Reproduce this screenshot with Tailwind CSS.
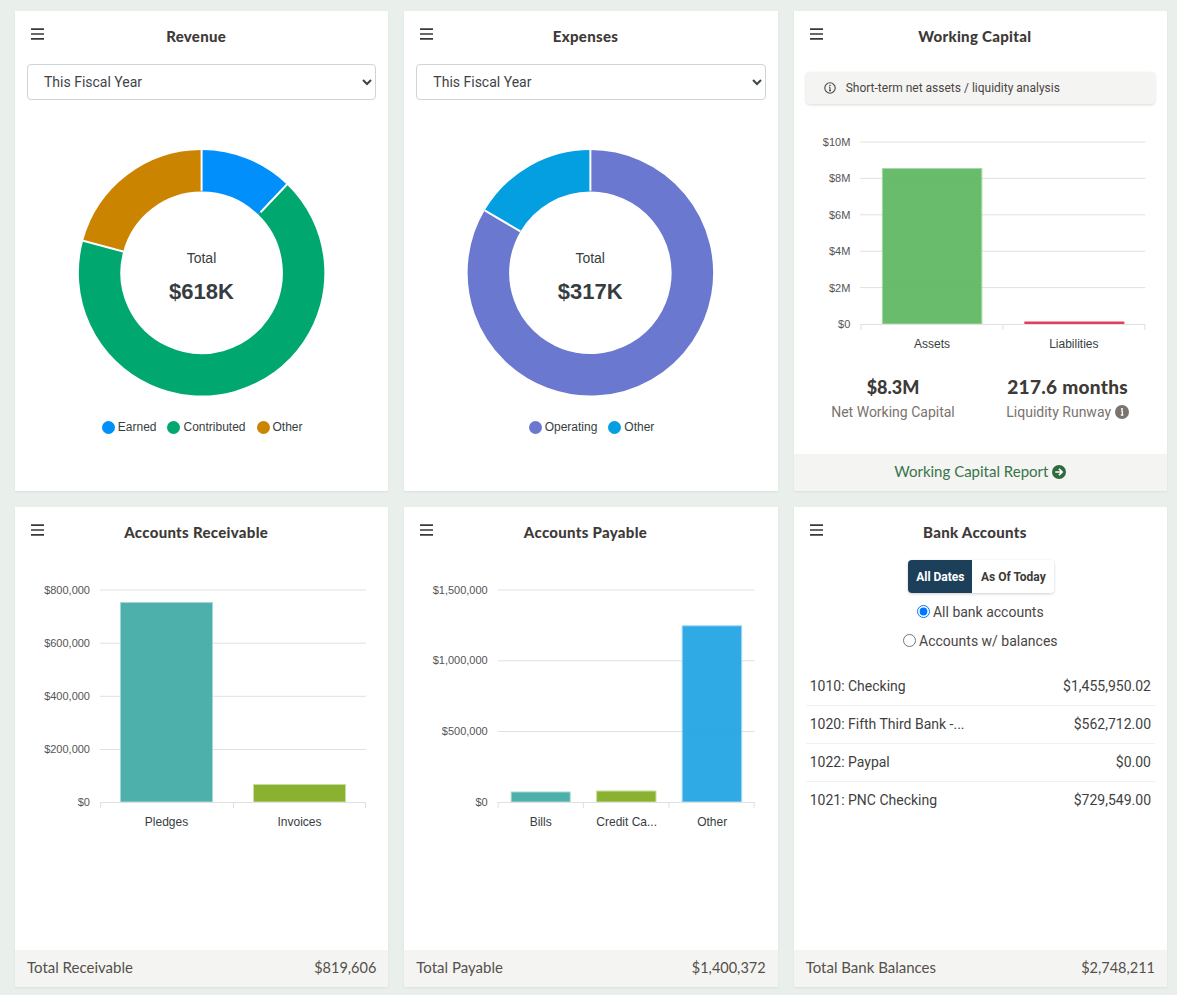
<!DOCTYPE html>
<html lang="en">
<head>
  <meta charset="UTF-8" />
  <title>Dashboard</title>
  <script src="https://cdn.jsdelivr.net/npm/@tailwindcss/browser@4"></script>
</head>
<body class="bg-[#e9f0ec] font-['Roboto',sans-serif] text-[#3d3a38]">
<div class="grid grid-cols-3 gap-4 pl-[15px] pr-[10px] pt-[11px] pb-2">

  <!-- Revenue -->
  <section class="bg-white h-[480px] flex flex-col shadow-[0_1px_2px_rgba(0,0,0,0.07)]">
    <div class="flex items-start h-[53px] pl-4 pr-10 pt-4">
      <svg class="mt-px w-[13px] h-3 text-[#3d3a38]" viewBox="0 0 13 12"><path d="M0 1.2h13M0 6h13M0 10.8h13" stroke="currentColor" stroke-width="1.7"/></svg>
      <h2 class="flex-1 text-center font-['Lato',sans-serif] font-black text-[15px] tracking-[0.3px] leading-[19px]">Revenue</h2>
    </div>
    <div class="px-3">
      <select class="w-full h-9 px-3 border border-[#ced4da] rounded text-sm text-[#3f4448] bg-white"><option>This Fiscal Year</option></select>
    </div>
    <svg class="mt-2.5 w-full h-[300px]" viewBox="15 110 373.33 300">
      <g transform="translate(201.6 272.8)" fill="none" stroke-width="41.5">
        <path d="M0 -102A102 102 0 0 1 70.86 -73.37" stroke="#008ffb"/>
        <path d="M70.86 -73.37A102 102 0 1 1 -98.43 -26.74" stroke="#00a76f"/>
        <path d="M-98.43 -26.74A102 102 0 0 1 0 -102" stroke="#cb8400"/>
        <path d="M0 -82V-123M59 -60.5L85.5 -88.5M-78.5 -21.3L-118.5 -32.1" stroke="#fff" stroke-width="2"/>
      </g>
      <text x="201.5" y="263" text-anchor="middle" class="font-['Liberation_Sans',sans-serif] text-sm" fill="#373d3f">Total</text>
      <text x="201.5" y="299" text-anchor="middle" class="font-['Liberation_Sans',sans-serif] text-[22px] font-bold" fill="#373d3f">$618K</text>
    </svg>
    <div class="mt-[7px] h-5 pl-px flex justify-center items-center gap-[11px] font-['Liberation_Sans',sans-serif] text-xs text-[#373d3f]">
      <span class="flex items-center gap-[3px]"><i class="w-[13px] h-[13px] rounded-full bg-[#008ffb]"></i>Earned</span>
      <span class="flex items-center gap-[3px]"><i class="w-[13px] h-[13px] rounded-full bg-[#00a76f]"></i>Contributed</span>
      <span class="flex items-center gap-[3px]"><i class="w-[13px] h-[13px] rounded-full bg-[#cb8400]"></i>Other</span>
    </div>
  </section>

  <!-- Expenses -->
  <section class="bg-white h-[480px] flex flex-col shadow-[0_1px_2px_rgba(0,0,0,0.07)]">
    <div class="flex items-start h-[53px] pl-4 pr-10 pt-4">
      <svg class="mt-px w-[13px] h-3 text-[#3d3a38]" viewBox="0 0 13 12"><path d="M0 1.2h13M0 6h13M0 10.8h13" stroke="currentColor" stroke-width="1.7"/></svg>
      <h2 class="flex-1 text-center font-['Lato',sans-serif] font-black text-[15px] tracking-[0.3px] leading-[19px]">Expenses</h2>
    </div>
    <div class="px-3">
      <select class="w-full h-9 px-3 border border-[#ced4da] rounded text-sm text-[#3f4448] bg-white"><option>This Fiscal Year</option></select>
    </div>
    <svg class="mt-2.5 w-full h-[300px]" viewBox="404.33 110 373.33 300">
      <g transform="translate(590.7 272.8)" fill="none" stroke-width="41.5">
        <path d="M0 -102A102 102 0 1 1 -87.8 -51.9" stroke="#6a78cf"/>
        <path d="M-87.8 -51.9A102 102 0 0 1 0 -102" stroke="#039fe0"/>
        <path d="M0 -82V-123M-70 -41.4L-105.7 -62.5" stroke="#fff" stroke-width="2"/>
      </g>
      <text x="590.5" y="263" text-anchor="middle" class="font-['Liberation_Sans',sans-serif] text-sm" fill="#373d3f">Total</text>
      <text x="590.5" y="299" text-anchor="middle" class="font-['Liberation_Sans',sans-serif] text-[22px] font-bold" fill="#373d3f">$317K</text>
    </svg>
    <div class="mt-[7px] h-5 pl-px flex justify-center items-center gap-[11px] font-['Liberation_Sans',sans-serif] text-xs text-[#373d3f]">
      <span class="flex items-center gap-[3px]"><i class="w-[13px] h-[13px] rounded-full bg-[#6a78cf]"></i>Operating</span>
      <span class="flex items-center gap-[3px]"><i class="w-[13px] h-[13px] rounded-full bg-[#039fe0]"></i>Other</span>
    </div>
  </section>

  <!-- Working Capital -->
  <section class="bg-white h-[480px] flex flex-col shadow-[0_1px_2px_rgba(0,0,0,0.07)]">
    <div class="flex items-start h-[61px] pl-4 pr-10 pt-4">
      <svg class="mt-px w-[13px] h-3 text-[#3d3a38]" viewBox="0 0 13 12"><path d="M0 1.2h13M0 6h13M0 10.8h13" stroke="currentColor" stroke-width="1.7"/></svg>
      <h2 class="flex-1 text-center font-['Lato',sans-serif] font-black text-[15px] tracking-[0.3px] leading-[19px]">Working Capital</h2>
    </div>
    <div class="mx-3 h-8 flex items-center gap-2.5 pl-[18px] bg-[#f4f4f2] rounded shadow-[0_1px_3px_rgba(0,0,0,0.15)] text-xs text-[#4a4644]">
      <svg class="w-3 h-3" viewBox="0 0 12 12"><circle cx="6" cy="6" r="5.2" fill="none" stroke="#4a4644" stroke-width="1.1"/><path d="M6 5.4v3M5 8.6h2M5 5.3h1" stroke="#4a4644" stroke-width="1.1" fill="none"/><circle cx="6" cy="3.5" r=".8" fill="#4a4644"/></svg>
      <span>Short-term net assets / liquidity analysis</span>
    </div>
    <svg class="mt-2 w-full h-[244px] font-['Liberation_Sans',sans-serif]" viewBox="793.67 112 373.33 244">
      <path d="M860 142H1145M860 178.4H1145M860 214.8H1145M860 251.2H1145M860 287.6H1145" stroke="#e0e0e0" fill="none"/>
      <rect x="882" y="168.5" width="99.5" height="155.5" fill="#5cb660" fill-opacity=".92" stroke="#a8d8aa"/>
      <rect x="1024" y="321.5" width="100" height="2.5" fill="#e0405e"/>
      <path d="M860 324.5H1145M860.5 324v6M1002.5 324v6M1144.5 324v6" stroke="#e0e0e0" fill="none"/>
      <g class="text-[11px]" fill="#555" text-anchor="end">
        <text x="850" y="146">$10M</text><text x="850" y="182">$8M</text><text x="850" y="219">$6M</text><text x="850" y="255">$4M</text><text x="850" y="292">$2M</text><text x="850" y="328">$0</text>
      </g>
      <g class="text-xs" fill="#373d3f" text-anchor="middle">
        <text x="931.7" y="348">Assets</text><text x="1073.5" y="348">Liabilities</text>
      </g>
    </svg>
    <div class="mx-3 mt-5 grid grid-cols-2 text-center">
      <div>
        <div class="font-['Lato',sans-serif] font-black text-lg leading-[22px]">$8.3M</div>
        <div class="mt-1 text-sm leading-5 text-[#7a736e]">Net Working Capital</div>
      </div>
      <div>
        <div class="font-['Lato',sans-serif] font-black text-[19px] tracking-[0.3px] leading-[22px]">217.6 months</div>
        <div class="mt-1 text-sm leading-5 text-[#7a736e] flex justify-center items-center gap-1">Liquidity Runway
          <svg class="w-3.5 h-3.5" viewBox="0 0 14 14"><circle cx="7" cy="7" r="7" fill="#7a736e"/><path d="M6 6.2h1.4v3.6M5.8 10h2.6" stroke="#fff" stroke-width="1.3" fill="none"/><circle cx="7" cy="4" r="1.1" fill="#fff"/></svg>
        </div>
      </div>
    </div>
    <div class="mt-auto h-[37px] pb-0.5 bg-[#f4f4f2] flex justify-center items-center gap-1 font-['Lato',sans-serif] text-[15px] text-[#38754a]">
      <span>Working Capital Report</span>
      <svg class="w-3.5 h-3.5" viewBox="0 0 14 14"><circle cx="7" cy="7" r="7" fill="#2f6b3f"/><path d="M3.3 7h6.6M7 3.9L10.1 7L7 10.1" stroke="#fff" stroke-width="1.7" fill="none"/></svg>
    </div>
  </section>

  <!-- Accounts Receivable -->
  <section class="bg-white h-[480px] flex flex-col shadow-[0_1px_2px_rgba(0,0,0,0.07)]">
    <div class="flex items-start h-[53px] pl-4 pr-10 pt-4">
      <svg class="mt-px w-[13px] h-3 text-[#3d3a38]" viewBox="0 0 13 12"><path d="M0 1.2h13M0 6h13M0 10.8h13" stroke="currentColor" stroke-width="1.7"/></svg>
      <h2 class="flex-1 text-center font-['Lato',sans-serif] font-black text-[15px] tracking-[0.3px] leading-[19px]">Accounts Receivable</h2>
    </div>
    <svg class="mt-2.5 w-full h-[270px] font-['Liberation_Sans',sans-serif]" viewBox="15 570 373.33 270">
      <path d="M100 590H366M100 643.2H366M100 696.3H366M100 749.5H366" stroke="#e0e0e0" fill="none"/>
      <rect x="120.5" y="602.5" width="92" height="199.5" fill="#3fa9a3" fill-opacity=".92" stroke="#a5d8d4"/>
      <rect x="253.5" y="784.5" width="92" height="17.5" fill="#86ae28" fill-opacity=".96" stroke="#c8dc9c"/>
      <path d="M100 802.5H366M100.5 802v6M233.5 802v6M365.5 802v6" stroke="#e0e0e0" fill="none"/>
      <g class="text-[11px]" fill="#555" text-anchor="end">
        <text x="90" y="594">$800,000</text><text x="90" y="647">$600,000</text><text x="90" y="700">$400,000</text><text x="90" y="753">$200,000</text><text x="90" y="806">$0</text>
      </g>
      <g class="text-xs" fill="#373d3f" text-anchor="middle">
        <text x="166.5" y="826">Pledges</text><text x="299.5" y="826">Invoices</text>
      </g>
    </svg>
    <div class="mt-auto h-[37px] pb-0.5 bg-[#f4f4f2] px-3 flex justify-between items-center font-['Lato',sans-serif] text-[15px] text-[#55504b]">
      <span>Total Receivable</span><span class="text-[14.5px]">$819,606</span>
    </div>
  </section>

  <!-- Accounts Payable -->
  <section class="bg-white h-[480px] flex flex-col shadow-[0_1px_2px_rgba(0,0,0,0.07)]">
    <div class="flex items-start h-[53px] pl-4 pr-10 pt-4">
      <svg class="mt-px w-[13px] h-3 text-[#3d3a38]" viewBox="0 0 13 12"><path d="M0 1.2h13M0 6h13M0 10.8h13" stroke="currentColor" stroke-width="1.7"/></svg>
      <h2 class="flex-1 text-center font-['Lato',sans-serif] font-black text-[15px] tracking-[0.3px] leading-[19px]">Accounts Payable</h2>
    </div>
    <svg class="mt-2.5 w-full h-[270px] font-['Liberation_Sans',sans-serif]" viewBox="404.33 570 373.33 270">
      <path d="M498 590H755M498 660.8H755M498 731.5H755" stroke="#e0e0e0" fill="none"/>
      <rect x="511.5" y="792" width="59" height="10" fill="#3fa9a3" fill-opacity=".92" stroke="#a5d8d4"/>
      <rect x="597" y="791" width="59.3" height="11" fill="#86ae28" fill-opacity=".96" stroke="#c8dc9c"/>
      <rect x="682.5" y="625.8" width="59.5" height="176.2" fill="#1ea3e3" fill-opacity=".92" stroke="#a0d8f4"/>
      <path d="M498 802.5H755M498.5 802v6M583.7 802v6M669.3 802v6M754.5 802v6" stroke="#e0e0e0" fill="none"/>
      <g class="text-[11px]" fill="#555" text-anchor="end">
        <text x="488" y="594">$1,500,000</text><text x="488" y="664">$1,000,000</text><text x="488" y="735">$500,000</text><text x="488" y="806">$0</text>
      </g>
      <g class="text-xs" fill="#373d3f" text-anchor="middle">
        <text x="541" y="826">Bills</text><text x="627" y="826">Credit Ca...</text><text x="712.5" y="826">Other</text>
      </g>
    </svg>
    <div class="mt-auto h-[37px] pb-0.5 bg-[#f4f4f2] px-3 flex justify-between items-center font-['Lato',sans-serif] text-[15px] text-[#55504b]">
      <span>Total Payable</span><span class="text-[14.5px]">$1,400,372</span>
    </div>
  </section>

  <!-- Bank Accounts -->
  <section class="bg-white h-[480px] flex flex-col shadow-[0_1px_2px_rgba(0,0,0,0.07)]">
    <div class="flex items-start h-[53px] pl-4 pr-10 pt-4">
      <svg class="mt-px w-[13px] h-3 text-[#3d3a38]" viewBox="0 0 13 12"><path d="M0 1.2h13M0 6h13M0 10.8h13" stroke="currentColor" stroke-width="1.7"/></svg>
      <h2 class="flex-1 text-center font-['Lato',sans-serif] font-black text-[15px] tracking-[0.3px] leading-[19px]">Bank Accounts</h2>
    </div>
    <div class="flex justify-center pl-0.5">
      <div class="flex h-[33px] rounded shadow-[0_1px_3px_rgba(0,0,0,0.2)] text-xs font-bold">
        <button class="w-16 rounded-l bg-[#1c405a] text-white">All Dates</button>
        <button class="w-[82px] rounded-r bg-white text-[#3d3a38]">As Of Today</button>
      </div>
    </div>
    <div class="mt-1 text-sm text-[#4a4644]">
      <label class="h-[29px] flex justify-center items-center gap-[3px]"><input type="radio" name="bank" checked />All bank accounts</label>
      <label class="h-[29px] flex justify-center items-center gap-[3px]"><input type="radio" name="bank" />Accounts w/ balances</label>
    </div>
    <ul class="mt-[13px] mx-3 text-sm text-[#3f3f3f]">
      <li class="h-[38px] px-1 pb-0.5 flex justify-between items-center border-b border-[#f0f0f0]"><span>1010: Checking</span><span>$1,455,950.02</span></li>
      <li class="h-[38px] px-1 pb-0.5 flex justify-between items-center border-b border-[#f0f0f0]"><span>1020: Fifth Third Bank -...</span><span>$562,712.00</span></li>
      <li class="h-[38px] px-1 pb-0.5 flex justify-between items-center border-b border-[#f0f0f0]"><span>1022: Paypal</span><span>$0.00</span></li>
      <li class="h-[38px] px-1 pb-0.5 flex justify-between items-center"><span>1021: PNC Checking</span><span>$729,549.00</span></li>
    </ul>
    <div class="mt-auto h-[37px] pb-0.5 bg-[#f4f4f2] px-3 flex justify-between items-center font-['Lato',sans-serif] text-[15px] text-[#55504b]">
      <span>Total Bank Balances</span><span class="text-[14.5px]">$2,748,211</span>
    </div>
  </section>

</div>
</body>
</html>
